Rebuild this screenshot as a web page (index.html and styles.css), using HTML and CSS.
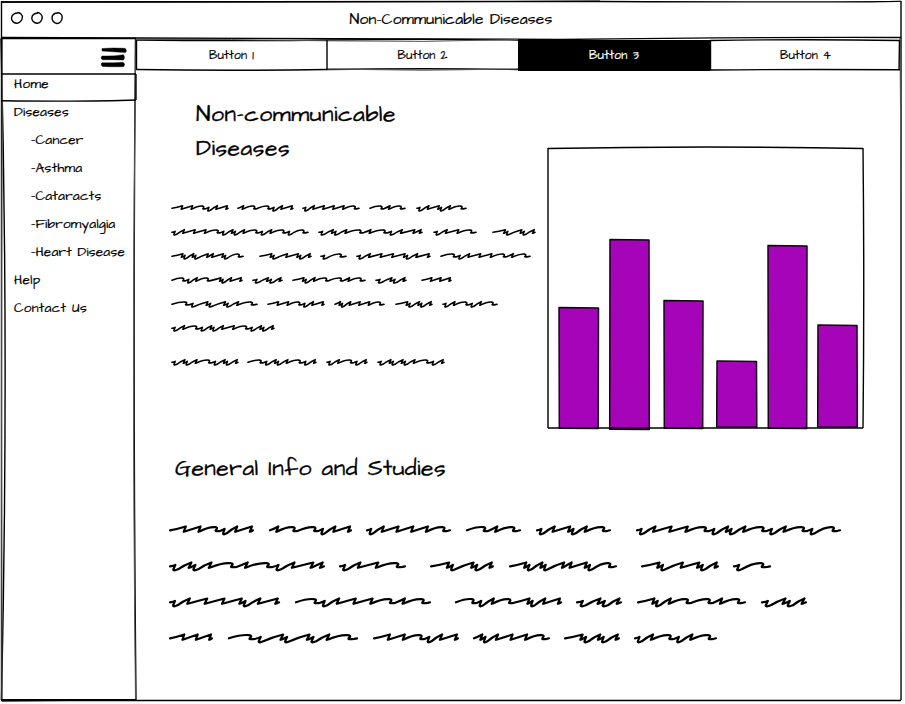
FILE: index.html
```html
<!DOCTYPE html>
<html lang="en">
<head>
<meta charset="utf-8">
<title>Non-Communicable Diseases</title>
<link rel="stylesheet" href="styles.css">
</head>
<body>
<div class="window">
  <svg class="sketch" viewBox="0 0 905 704">
    <path d="M1 2 Q300 0.5 600 1.5 T901 1"/>
    <path d="M1 2 L600 1.3"/>
    <path d="M901 1 Q899.5 300 901 700"/>
    <path class="soft" d="M900 38 Q902.5 350 900.5 700"/>
    <path d="M1 700.5 Q450 698.5 901 700.5"/>
    <path class="soft" d="M2 701.5 L136 699.5"/>
    <path d="M1.5 1 Q0 350 1.5 700"/>
    <path d="M1 37.5 L136 38 L560 39.5 Q750 37 901 37.5"/>
  </svg>
  <header class="titlebar">
    <svg class="dots" width="54" height="14" viewBox="0 0 54 14">
      <path d="M7 1C10 0 13 3 12.300 6C12 9 9 11.500 6.500 11.300C3.500 11 1.300 8.500 1.500 6C2 2.500 4 1 8 1"/>
      <path d="M27 .5C30 .5 32.500 3 32.200 6C32 9 29.500 11.500 27 11.300C24 11 21.700 8.500 21.800 6C22 3 24 1.300 28 1"/>
      <path d="M46 1.300C49 -.2 52.600 2 52.200 5.500C52 9 49.500 11.600 47 11.500C44 11.200 42 8.500 42 6C42 3 44 1 48 1"/>
    </svg>
    <h1 class="title"><span data-width="203">Non-Communicable Diseases</span></h1>
  </header>
  <div class="body">
    <aside class="sidebar">
      <svg class="sketch" viewBox="0 0 136 663">
        <path d="M1 0.500 Q9 320 1.500 662"/>
        <path class="soft" d="M2.500 0 Q1 300 2 662"/>
        <path d="M135.500 0 Q132.500 320 136 662"/>
        <path class="soft" d="M136 0 Q131.500 300 135.500 662"/>
        <path d="M1 0.500 L136 0.500"/>
        <path class="heavy" d="M1 662 L136 662"/>
      </svg>
      <div class="menu-bar">
        <svg class="menu" width="28" height="22" viewBox="0 0 28 22">
          <path d="M2 1.500Q12 .5 25 1.300Q27.500 3.500 25.500 5.500Q12 4.800 2 4Z"/>
          <path d="M2 9Q14 9.500 23.500 7.700Q25.500 10.500 23.500 13Q12 12.500 2.500 12.800Q0 11 2 9Z"/>
          <path d="M2 15.800Q13 16 23 15.300Q26 17.500 23.500 19.700Q12 20 2.500 19.500Q0 17.500 2 15.800Z"/>
        </svg>
      </div>
      <nav class="nav">
        <a class="item current"><svg class="sketch" viewBox="0 0 136 28"><path d="M1 1L136 1"/><path d="M1 27.800Q90 28.800 136 27"/><path d="M136 1V27"/></svg><span data-width="35">Home</span></a>
        <a class="item"><span data-width="55">Diseases</span></a>
        <a class="item sub"><span data-width="52.500">-Cancer</span></a>
        <a class="item sub"><span data-width="51.500">-Asthma</span></a>
        <a class="item sub"><span data-width="70.500">-Cataracts</span></a>
        <a class="item sub"><span data-width="84.500">-Fibromyalgia</span></a>
        <a class="item sub"><span data-width="94">-Heart Disease</span></a>
        <a class="item"><span data-width="26.500">Help</span></a>
        <a class="item"><span data-width="73">Contact Us</span></a>
      </nav>
    </aside>
    <main class="main">
      <div class="tabs">
        <div class="tab"><span data-width="45">Button 1</span></div>
        <div class="tab"><span data-width="50">Button 2</span></div>
        <div class="tab active"><span data-width="50">Button 3</span></div>
        <div class="tab"><span data-width="51">Button 4</span></div>
        <svg class="sketch" viewBox="0 0 765 33">
          <path d="M.5 2Q95 3.300 191 2T382 2M574 2.500Q670 1 764 2.500"/>
          <path class="soft" d="M1 1.500Q95 1 191 2.800T382 1.500"/>
          <path d="M.5 31.500Q95 33 191 31.500T382 31.500M574 32Q670 31 764 31.800"/>
          <path class="soft" d="M191 31Q286 33.500 382 31"/>
          <path d="M.5 2V32M191 2V32M574.500 2V32M763.500 2L763 32"/>
        </svg>
      </div>
      <div class="intro">
        <section class="article">
          <h2 class="heading"><span data-width="200">Non-communicable</span><br><span data-width="94">Diseases</span></h2>
          <div class="scribbles small" id="summary"></div>
        </section>
        <figure class="chart">
          <svg class="sketch" viewBox="0 0 317 284">
            <path d="M1 1.500Q160 -1.500 316 1.500"/>
            <path d="M1 1Q1.500 140 1 281M316 1Q317.500 140 316 281"/>
            <path d="M1 281H316"/>
          </svg>
          <svg class="bars" id="bars" width="317" height="284"></svg>
        </figure>
      </div>
      <section class="studies">
        <h2 class="heading"><span data-width="271">General Info and Studies</span></h2>
        <div class="scribbles large" id="details"></div>
      </section>
    </main>
  </div>
</div>
<script src="script.js"></script>
</body>
</html>
```
FILE: styles.css
```css
* { box-sizing: border-box; }
body {
  margin: 0;
  background: #fff;
  color: #000;
  font-family: "Architects Daughter", Lato, "Open Sans", sans-serif;
  -webkit-text-stroke: 0.2px currentColor;
}
h1, h2, figure { margin: 0; font-weight: 400; }
svg { display: block; overflow: visible; }
.window { position: relative; width: 905px; height: 704px; overflow: hidden; }
.sketch {
  position: absolute;
  inset: 0;
  width: 100%;
  height: 100%;
  fill: none;
  stroke: #000;
  stroke-width: 1.4;
  pointer-events: none;
}
.sketch .soft { stroke-width: 1; stroke: #555; }
.sketch .heavy { stroke-width: 2; }
.titlebar { display: flex; align-items: center; height: 38px; padding-left: 10px; }
.dots { fill: none; stroke: #000; stroke-width: 1.4; flex: none; }
.title { width: 774px; text-align: center; font-size: 15.5px; line-height: 21px; }
.body { display: flex; height: 663px; }
.sidebar { position: relative; width: 136px; flex: none; }
.menu-bar { display: flex; justify-content: flex-end; height: 35px; padding: 9px 8px 0 0; }
.menu { fill: #000; stroke: #000; stroke-width: 0.4; stroke-linejoin: round; }
.item { position: relative; display: block; height: 28px; padding-left: 14px; font-size: 13.5px; line-height: 22px; white-space: nowrap; }
.sub { padding-left: 31px; }
.main { flex: none; width: 765px; }
.tabs { position: relative; display: grid; grid-template-columns: 191px 191px 192px 191px; height: 33px; padding-top: 2px; }
.tab { display: flex; justify-content: center; font-size: 12px; line-height: 32px; height: 31px; }
.active { background: #000; color: #fff; }
.intro { display: flex; }
.article { width: 411px; padding: 26px 0 0 36px; }
.heading { font-size: 23px; line-height: 34px; white-space: nowrap; -webkit-text-stroke-width: 0.3px; }
.article .heading { padding-left: 24px; }
.chart { position: relative; width: 317px; height: 284px; margin-top: 76px; }
.bars { fill: #a604b8; stroke: #160018; stroke-width: 1.5; stroke-linejoin: round; }
.studies { padding: 20px 0 0 33px; }
.studies .heading { padding-left: 6px; }
.scribbles { fill: none; stroke: #000; stroke-linecap: round; stroke-linejoin: round; }
.small { padding-top: 31px; stroke-width: 1.6; }
.small svg { width: 380px; height: 24px; }
.small .paragraph { margin-top: 10px; }
.large { padding-top: 27px; stroke-width: 2.2; }
.large svg { width: 700px; height: 36px; }
```
FILE: script.js
```js
// Spread each label over its drawn width.
document.querySelectorAll('[data-width]').forEach(el => {
  el.style.letterSpacing = '0px';
  const natural = el.getBoundingClientRect().width;
  const gap = (Number(el.dataset.width) - natural) / el.textContent.length;
  el.style.letterSpacing = gap.toFixed(3) + 'px';
});

const NS = 'http://www.w3.org/2000/svg';
function add(parent, name, attrs) {
  const el = document.createElementNS(NS, name);
  for (const key in attrs) el.setAttribute(key, attrs[key]);
  parent.appendChild(el);
  return el;
}

// Stroke kinds: n = peak, w = long wave, a = short hook, d = dip, s = rise out of a dip.
const WIDTH = { n: 14, w: 20, a: 7, d: 6, s: 9 };
function scribble(code, start, end, size) {
  const total = [...code].reduce((sum, c) => sum + WIDTH[c], 2);
  const k = (end - start) / total;
  const cy = (size === 1 ? 18.3 : 12.3);
  const X = v => (start + v * k).toFixed(1);
  const Y = v => (cy + v * size).toFixed(1);
  let x = 0;
  let path = `M${X(0)} ${Y(0)}`;
  for (const c of code) {
    const w = WIDTH[c];
    const e = x + w;
    if (c === 'd') {
      path += `Q${X(x + 3)} ${Y(-0.5)} ${X(x + 4)} ${Y(-1.5)}L${X(x + 2.5)} ${Y(3.2)}Q${X(x + 2.5)} ${Y(5)} ${X(e)} ${Y(3)}`;
    } else if (c === 'w') {
      path += `Q${X(x + 9)} ${Y(-3.8)} ${X(x + 15)} ${Y(-3.2)}Q${X(x + 18)} ${Y(-2.8)} ${X(x + 16)} ${Y(-0.5)}Q${X(x + 14)} ${Y(1.8)} ${X(e)} ${Y(0.5)}`;
    } else {
      path += `Q${X(x + w * 0.5)} ${Y(-1.2)} ${X(e + 1)} ${Y(-3.8)}L${X(e - 1)} ${Y(1.5)}L${X(e)} ${Y(1.2)}`;
    }
    x = e;
  }
  return path + `L${X(x + 2)} ${Y(0)}`;
}

function drawLines(id, lines, size) {
  const host = document.getElementById(id);
  lines.forEach((line, i) => {
    const svg = add(host, 'svg', {});
    if (id === 'summary' && i === 6) svg.setAttribute('class', 'paragraph');
    line.forEach(([code, from, to]) => add(svg, 'path', { d: scribble(code, from, to, size) }));
  });
}

drawLines('summary', [
  [['nnwdsn', 0, 56], ['awwdsn', 66, 121], ['dsnnnw', 131, 187], ['waw', 198, 233], ['dsndsw', 245, 294]],
  [['dsnnwdsdswdswdw', 0, 136], ['dsdswawdsna', 147, 250], ['dsnw', 262, 304], ['ndnds', 321, 363]],
  [['ndsdnandw', 0, 71], ['ndnnds', 88, 139], ['dw', 149, 174], ['dsnnndsn', 185, 258], ['wdsnnwaw', 269, 358]],
  [['wdswndsn', 0, 70], ['dsda', 81, 110], ['ndswwaw', 121, 193], ['dsda', 204, 234], ['nnn', 250, 279]],
  [['wdndndsw', 0, 85], ['nnwdsn', 96, 152], ['adsnnw', 163, 212], ['ndsds', 224, 260], ['dswdsw', 271, 325]],
  [['dswdsdsnwdsds', 0, 102]],
  [['dsdswdsds', 0, 66], ['wdsdswds', 76, 144], ['dswds', 155, 195], ['dsdsdswds', 206, 272]]
], 0.68);

drawLines('details', [
  [['nnwdsn', 1, 84], ['awwdsn', 101, 182], ['dsnnnw', 198, 281], ['waw', 298, 351], ['dsndsw', 368, 441], ['dsnnwdsdswdswdw', 468, 671]],
  [['dsdswawdsna', 1, 155], ['dsnw', 171, 236], ['ndnds', 262, 324], ['ndsdnandw', 341, 447], ['ndnnds', 473, 549], ['dw', 565, 601]],
  [['dsnnndsn', 1, 110], ['wdsnnwaw', 127, 261], ['wdswndsn', 287, 392], ['dsda', 408, 452], ['ndswwaw', 469, 576], ['dsda', 593, 637]],
  [['nnn', 1, 43], ['wdndndsw', 60, 188], ['nnwdsn', 205, 289], ['adsnnw', 305, 380], ['ndsds', 396, 450], ['dswdsw', 466, 547]]
], 1);

// Slightly uneven bars: left, top, right edge and bottom.
[[12, 160.5, 51.5, 281.5], [63, 92.5, 102, 282.5], [117, 153.5, 156, 281.5],
 [170, 214, 209.5, 280], [221, 98.5, 260, 281.5], [271, 178, 310, 280]].forEach(([l, t, r, b], i) => {
  const lean = i % 2 ? 0.3 : -0.3;
  add(document.getElementById('bars'), 'path', {
    d: `M${l} ${t}L${r} ${t + 0.6}L${r + lean} ${b}L${l - lean} ${b - 0.3}Z`
  });
});
```
